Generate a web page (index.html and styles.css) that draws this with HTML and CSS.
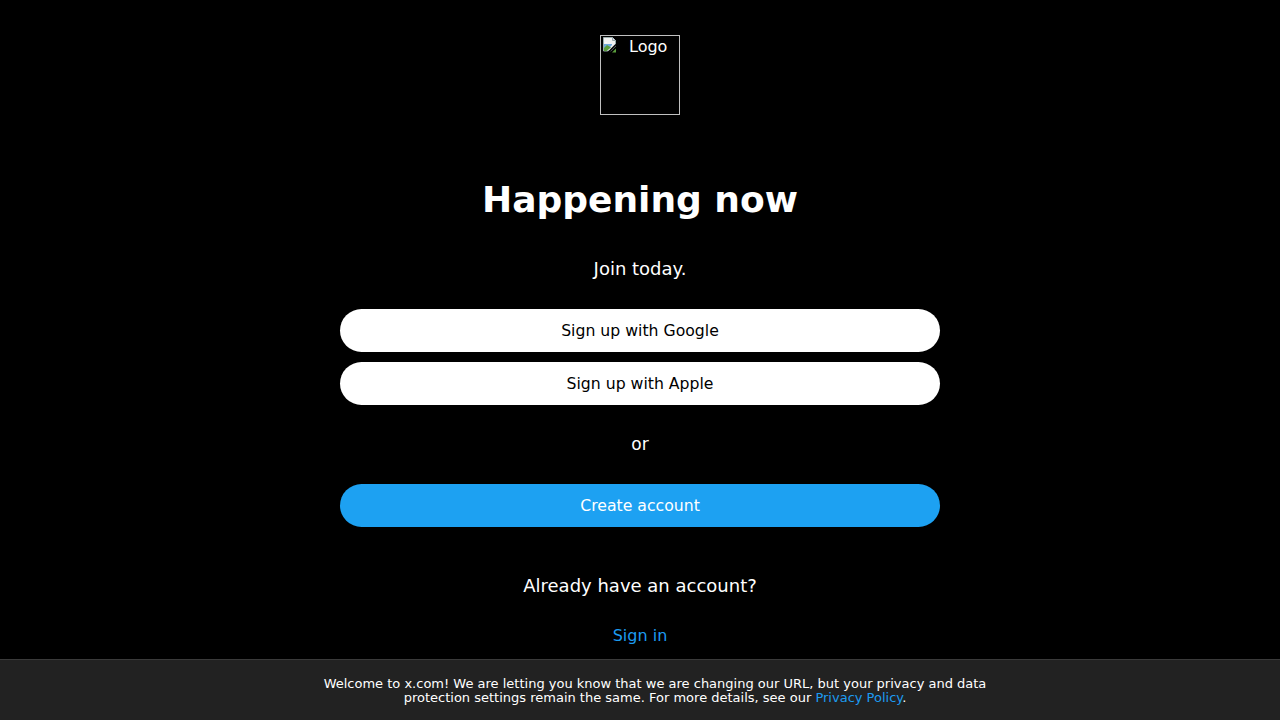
FILE: index.html
```html
<!DOCTYPE html>
<html lang="en">
<head>
<meta charset="utf-8">
<title>X</title>
<link rel="stylesheet" href="styles.css">
</head>
<body>
<main class="page">
  <div class="logo">
    <svg class="broken" width="16" height="16" viewBox="0 0 16 16">
      <path d="M1.5 0.5h9l3 3v5.5l-5 5h-7z" fill="#f2f2f2" stroke="#9aa" stroke-width="1"/>
      <path d="M10.5 0.5v3h3" fill="#dde" stroke="#9aa" stroke-width="1"/>
      <path d="M2 7h8v1l-5 5.5H2z" fill="#6fa8dc"/>
      <path d="M2 11l3-3 4 2.5-4.5 3.5H2z" fill="#5a9e3c"/>
      <path d="M3 6c0-1 2-1 2 0h-2z" fill="#fff"/>
      <path d="M6 15.5l8-8" stroke="#000" stroke-width="1.6"/>
      <path d="M10 15.5l4-4v4z" fill="#5a9e3c"/>
    </svg>
    <span class="logo-alt">Logo</span>
  </div>
  <h1 class="title">Happening now</h1>
  <p class="subtitle">Join today.</p>
  <div class="buttons">
    <button class="btn btn-white">Sign up with Google</button>
    <button class="btn btn-white">Sign up with Apple</button>
  </div>
  <p class="or">or</p>
  <button class="btn btn-blue">Create account</button>
  <p class="already">Already have an account?</p>
  <a class="signin" href="#">Sign in</a>
</main>
<footer class="notice">
  <p>Welcome to x.com! We are letting you know that we are changing our URL, but your privacy and data protection settings remain the same. For more details, see our <a href="#">Privacy Policy</a>.</p>
</footer>
</body>
</html>
```
FILE: styles.css
```css
html, body {
  margin: 0;
  padding: 0;
  background: #000;
  color: #fff;
  font-family: "DejaVu Sans", sans-serif;
}
.page {
  display: flex;
  flex-direction: column;
  align-items: center;
  padding-top: 35px;
}
.logo {
  width: 80px;
  height: 80px;
  box-sizing: border-box;
  border: 1px solid #c0c0c0;
  display: flex;
  align-items: flex-start;
  padding: 1px;
  font-size: 16px;
  line-height: 19px;
}
.broken {
  flex: none;
}
.logo-alt {
  margin-left: 11px;
}
.title {
  margin: 63px 0 0;
  font-size: 36px;
  line-height: 43px;
  font-weight: 700;
}
.subtitle {
  margin: 38px 0 0;
  font-size: 18px;
  line-height: 20px;
}
.buttons {
  display: flex;
  flex-direction: column;
  gap: 10px;
  margin-top: 30px;
}
.btn {
  width: 600px;
  height: 43px;
  border: none;
  border-radius: 22px;
  font-family: "DejaVu Sans", sans-serif;
  font-size: 15.7px;
  cursor: pointer;
}
.btn-white {
  background: #fff;
  color: #000;
}
.btn-blue {
  background: #1da1f2;
  color: #fff;
  margin-top: 30px;
}
.or {
  margin: 29px 0 0;
  font-size: 17px;
  line-height: 20px;
}
.already {
  margin: 48px 0 0;
  font-size: 18px;
  line-height: 22px;
}
.signin {
  margin-top: 29px;
  color: #1d9bf0;
  text-decoration: none;
  font-size: 16px;
  line-height: 19px;
}
.notice {
  position: fixed;
  left: 0;
  right: 0;
  bottom: 0;
  height: 61px;
  box-sizing: border-box;
  padding-left: 30px;
  padding-top: 2px;
  background: #222;
  border-top: 1px solid #3a3a3a;
  display: flex;
  justify-content: center;
  align-items: center;
}
.notice p {
  margin: 0;
  max-width: 680px;
  text-align: center;
  font-size: 13px;
  line-height: 14px;
  color: #fff;
}
.notice a {
  color: #1d9bf0;
  text-decoration: none;
}
```
